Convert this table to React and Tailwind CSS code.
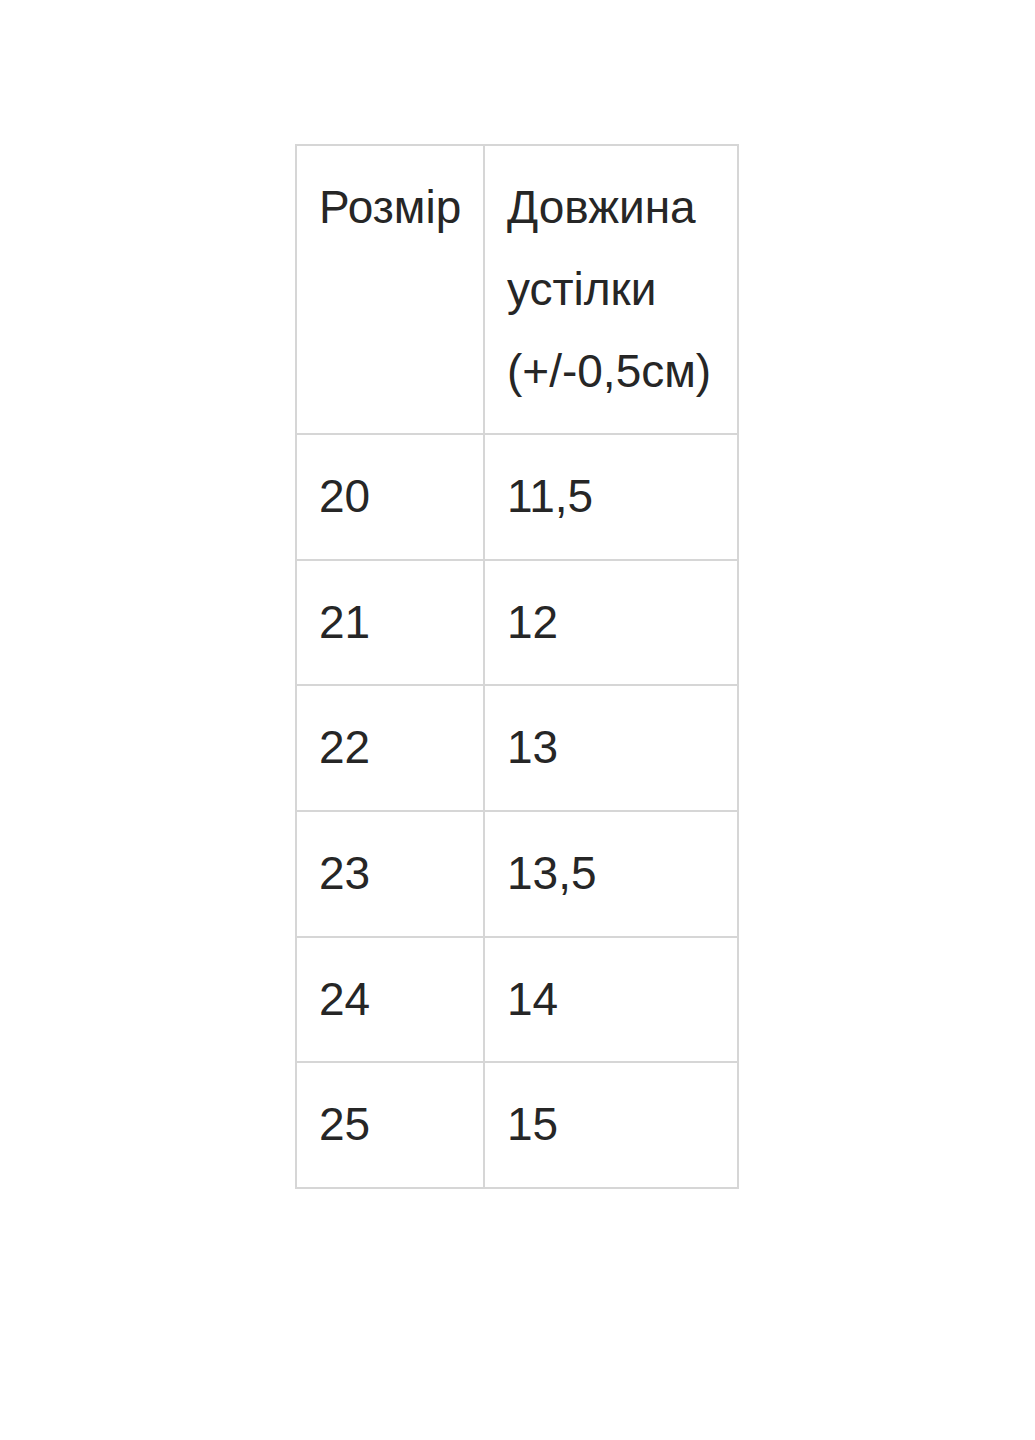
const rows = [
  ["20", "11,5"],
  ["21", "12"],
  ["22", "13"],
  ["23", "13,5"],
  ["24", "14"],
  ["25", "15"],
];

export default function App() {
  return (
    <div className="min-h-[1440px] w-[1035px] bg-white pt-[144px] pl-[295px]" style={{ fontFamily: '"Liberation Sans", Arial, sans-serif' }}>
      <table className="table-fixed border-collapse w-[442px] text-[46px] leading-[82px] text-[#262626]">
        <colgroup>
          <col className="w-[188px]" />
          <col className="w-[254px]" />
        </colgroup>
        <tbody>
          <tr>
            <td className="border-2 border-[#d6d6d6] align-top pl-[22px] pr-2 pt-[20px] pb-[21px]">Розмір</td>
            <td className="border-2 border-[#d6d6d6] align-top pl-[22px] pr-2 pt-[20px] pb-[21px]">
              Довжина устілки (+/-0,5см)
            </td>
          </tr>
          {rows.map(([size, len]) => (
            <tr key={size}>
              <td className="border-2 border-[#d6d6d6] align-top pl-[22px] pt-[20px] pb-[21.7px]">{size}</td>
              <td className="border-2 border-[#d6d6d6] align-top pl-[22px] pt-[20px] pb-[21.7px]">{len}</td>
            </tr>
          ))}
        </tbody>
      </table>
    </div>
  );
}
